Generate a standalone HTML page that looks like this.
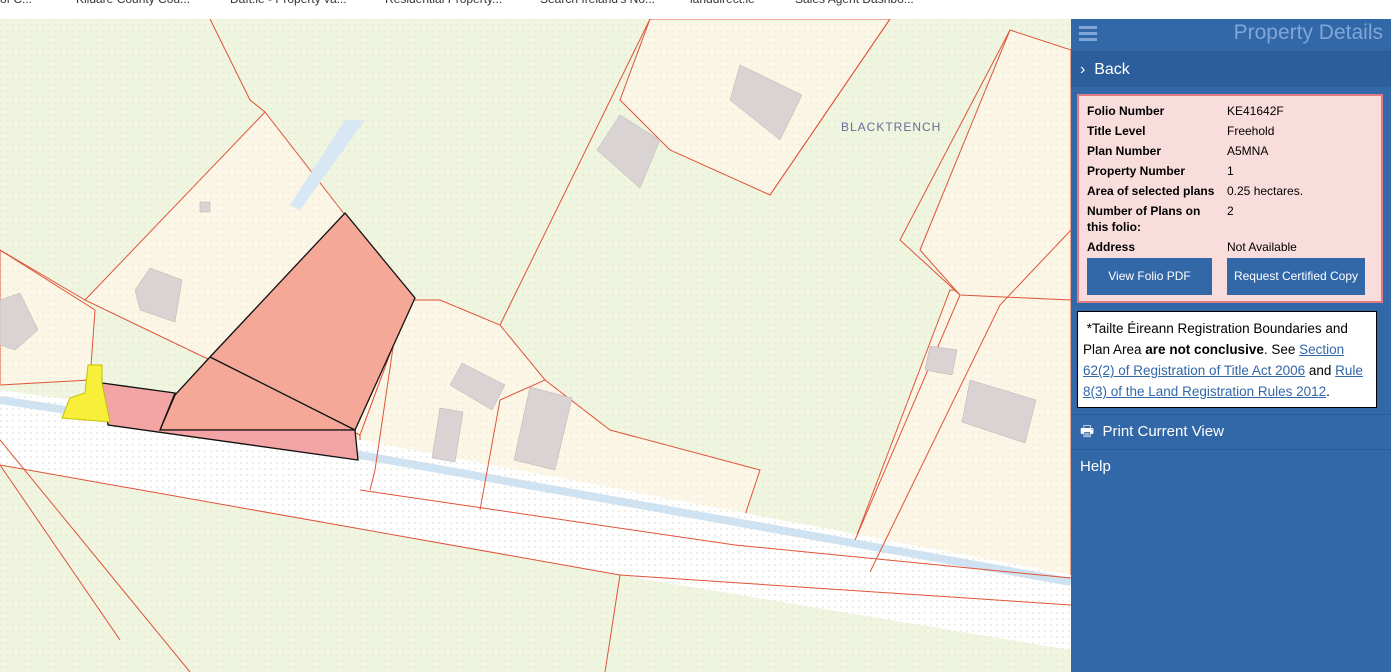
<!DOCTYPE html><html><head><style>
body{margin:0;width:1391px;height:672px;overflow:hidden;font-family:"Liberation Sans",sans-serif;position:relative;background:#fff}
#top{position:absolute;left:0;top:0;width:1391px;height:19px;background:#fff;font-size:12px;color:#333;white-space:nowrap;overflow:hidden}
#top span{position:absolute;top:-8px}
#map{position:absolute;left:0;top:19px}
#side{position:absolute;left:1071px;top:19px;width:320px;height:653px;background:#3267a8;color:#fff}
.hd{height:32px;border-bottom:1px solid #2a5a94;position:relative}
.hd .t{position:absolute;right:8px;top:2px;font-size:21px;color:#7fa6d6}
.bk{height:35px;background:#2d5e9c;font-size:16px;line-height:35px;padding-left:9px}
.card{margin:7px 8px 0 6px;background:#f9dcdc;border:2px solid #e07b84;padding:5px 8px 6px 8px;color:#000;font-size:12px}
.row{display:flex;line-height:20px}.row b{width:140px}
.btns{display:flex;margin-top:1px}
.btn{background:#3267a8;color:#fff;height:37px;line-height:37px;text-align:center;font-size:12px}
.note{margin:8px 14px 0 6px;background:#fff;border:1px solid #000;color:#000;font-size:13.5px;line-height:21px;padding:6px 5px 5px 5px}
.note a{color:#3267a8;text-decoration:underline}
.m{height:34px;line-height:34px;font-size:15px;padding-left:9px;border-bottom:1px solid #2a5a94}
</style></head><body>
<div id="top"><span style="left:0">of C...</span><span style="left:76px">Kildare County Cou...</span><span style="left:230px">Daft.ie - Property va...</span><span style="left:385px">Residential Property...</span><span style="left:540px">Search Ireland's No...</span><span style="left:690px">landdirect.ie</span><span style="left:795px">Sales Agent Dashbo...</span></div>
<svg id="map" width="1071" height="653" viewBox="0 19 1071 653">
<defs><pattern id="d" width="6" height="6" patternUnits="userSpaceOnUse"><circle cx="1" cy="1" r=".6" fill="#c9c3b0"/></pattern></defs>
<rect x="0" y="19" width="1071" height="653" fill="#eff5df"/>
<g fill="#fbf6e6" stroke="#e0533a" stroke-width="1">
<polygon points="620,100 650,19 890,19 770,195 670,150"/>
<polygon points="85,300 265,112 345,215 410,300 360,435 210,360"/>
<polygon points="0,250 95,310 90,380 0,385"/>
<polygon points="360,435 410,300 440,300 500,325 545,380 610,430 760,470 735,545 490,510 360,490"/>
<polygon points="855,540 950,290 1071,295 1071,580"/>
<polygon points="920,250 1010,30 1071,50 1071,300 960,295"/>
</g>
<path d="M0,390 L360,440 L1071,575 L1071,650 L620,575 L0,465 Z" fill="#fff"/>
<path d="M0,390 L360,440 L1071,575 L1071,650 L620,575 L0,465 Z" fill="url(#d)"/>
<path d="M0,400 L360,455 L1071,582" stroke="#cfe3f2" stroke-width="8" fill="none"/>
<rect x="0" y="19" width="1071" height="653" fill="url(#d)" opacity=".5"/>
<g fill="none" stroke="#e0533a" stroke-width="1">
<path d="M210,19 L250,100 L265,112"/><path d="M0,250 L85,300"/><path d="M0,440 L190,672"/><path d="M0,465 L120,640"/>
<path d="M650,19 L500,325"/><path d="M770,195 L890,19"/><path d="M1010,30 L900,240 L960,295 L855,540"/><path d="M1071,230 L1000,305 L870,572"/>
<path d="M620,575 L605,672"/><path d="M0,465 L620,575 L1071,605"/><path d="M360,490 L735,545 L1071,578"/>
<path d="M480,510 L500,400 L545,380"/><path d="M400,300 L375,470 L370,490"/>
</g>
<g fill="#d9d4d3" stroke="#b7b1b0" stroke-width=".5">
<polygon points="740,65 802,95 780,140 730,100"/><polygon points="597,150 620,115 660,140 640,188"/>
<polygon points="135,290 150,268 182,280 175,322 140,310"/><polygon points="0,300 20,293 38,330 15,350 0,345"/>
<polygon points="462,363 505,385 492,410 450,385"/><polygon points="440,408 463,412 455,462 432,458"/>
<polygon points="530,387 572,398 555,470 514,460"/><polygon points="930,346 957,350 952,375 925,370"/>
<polygon points="970,380 1036,400 1025,443 962,422"/><rect x="200" y="202" width="10" height="10"/>
</g>
<path d="M345,120 L365,120 L300,210 L290,205 Z" fill="#d7e8f4"/>
<polygon points="210,357 345,213 415,298 355,430 160,430 175,395" fill="#f6a898" stroke="#111" stroke-width="1.3"/>
<path d="M210,357 L355,430" stroke="#111" stroke-width="1.3"/>
<polygon points="102,383 175,393 160,430 355,430 358,460 108,425" fill="#f3a5a5" stroke="#111" stroke-width="1.3"/>
<polygon points="88,365 102,365 102,383 110,422 62,418 70,398 85,393" fill="#f7ef3a" stroke="#c6c000"/>
<text x="841" y="131" font-size="12" fill="#6e6a9a" letter-spacing="1">BLACKTRENCH</text>
</svg>
<div id="side">
<div class="hd"><svg style="position:absolute;left:8px;top:7px" width="18" height="15"><rect y="0" width="18" height="3" fill="#7fa6d6"/><rect y="6" width="18" height="3" fill="#7fa6d6"/><rect y="12" width="18" height="3" fill="#7fa6d6"/></svg><span class="t">Property Details</span></div>
<div class="bk">›&nbsp;&nbsp;Back</div>
<div class="card">
<div class="row"><b>Folio Number</b><span>KE41642F</span></div>
<div class="row"><b>Title Level</b><span>Freehold</span></div>
<div class="row"><b>Plan Number</b><span>A5MNA</span></div>
<div class="row"><b>Property Number</b><span>1</span></div>
<div class="row"><b>Area of selected plans</b><span>0.25 hectares.</span></div>
<div class="row" style="line-height:16px;margin:2px 0"><b style="padding-right:12px;width:128px">Number of Plans on this folio:</b><span>2</span></div>
<div class="row"><b>Address</b><span>Not Available</span></div>
<div class="btns"><div class="btn" style="width:125px">View Folio PDF</div><div class="btn" style="width:138px;margin-left:15px">Request Certified Copy</div></div>
</div>
<div class="note">&nbsp;*Tailte Éireann Registration Boundaries and Plan Area <b>are not conclusive</b>. See <a>Section 62(2) of Registration of Title Act 2006</a> and <a>Rule 8(3) of the Land Registration Rules 2012</a>.</div>
<div class="m" style="margin-top:6px;border-top:1px solid #2a5a94">🖶&nbsp; Print Current View</div>
<div class="m" style="border:0">Help</div>
</div>
</body></html>
